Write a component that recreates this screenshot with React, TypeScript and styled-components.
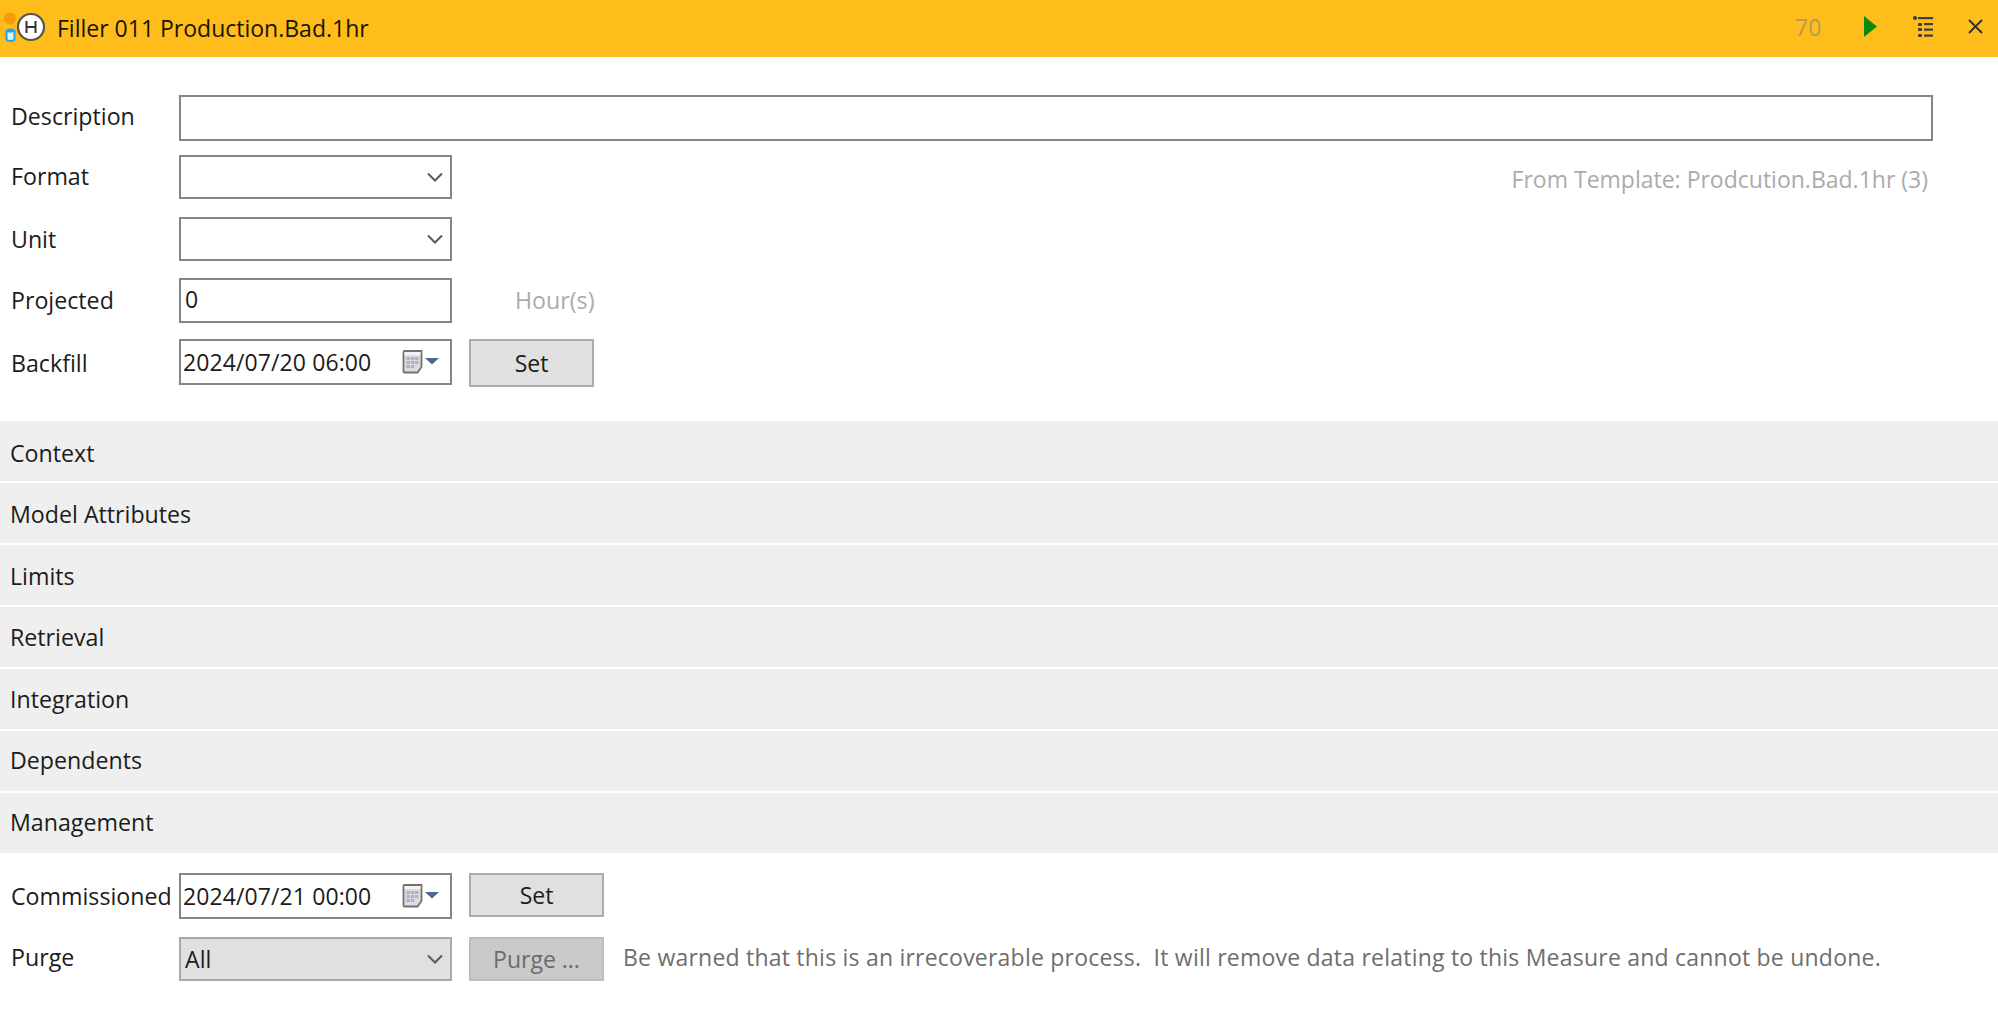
import React from "react";
import styled, { createGlobalStyle } from "styled-components";

const nudge = (dy = 0) => (dy >= 0 ? `padding-top: ${dy * 2}px;` : `padding-bottom: ${-dy * 2}px;`);

const Global = createGlobalStyle`
  html, body { margin: 0; padding: 0; background: #fff; }
  body { font-family: "Open Sans", "Noto Sans", "Liberation Sans", sans-serif; color: #1c1c1c; }
`;
const Page = styled.div`width: 1998px; height: 1016px; overflow: hidden; background: #fff; font-size: 23px;`;
const Header = styled.header`box-sizing: border-box; display: flex; align-items: center; height: 57px; padding-bottom: 4px; background: #febd1b;`;
const Title = styled.div`margin-left: 11px; flex: 1; padding-top: 2px; font-size: 23px; color: #1a1400;`;
const Count = styled.span`font-size: 23px; color: #b39a5a; width: 25px;`;
const HeaderIcon = styled.svg`display: block; flex: none;`;
const Form = styled.section`display: flex; flex-direction: column; padding: 38px 0 36px 0;`;
const Row = styled.div<{ $h: number; $mt?: number }>`
  display: flex; align-items: center; height: ${p => p.$h}px; margin-top: ${p => p.$mt ?? 0}px; padding-left: 11px;
`;
const Label = styled.label<{ $dy?: number }>`flex: none; width: 168px; font-size: 23.2px; color: #1c1c1c; ${p => nudge(p.$dy)}`;
const Box = styled.div<{ $w?: number; $disabled?: boolean; $pad?: number }>`
  box-sizing: border-box; display: flex; align-items: center; height: 100%; width: ${p => p.$w ?? 273}px;
  border: 2px solid ${p => (p.$disabled ? "#a9a9a9" : "#858585")};
  background: ${p => (p.$disabled ? "#e0e0e0" : "#fff")};
  padding-left: ${p => p.$pad ?? 4}px; font-size: 23px; color: #1c1c1c; flex: none;
`;
const Value = styled.span<{ $dy?: number }>`flex: 1; white-space: nowrap; letter-spacing: 0.1px; ${p => nudge(p.$dy)}`;
const Hint = styled.span`margin-left: 63px; padding-bottom: 2px; color: #ababab; font-size: 23.2px;`;
const FromTemplate = styled.span`margin-left: auto; margin-right: 70px; padding-top: 4px; color: #ababab; font-size: 23px;`;
const Btn = styled.button<{ $w: number; $h: number; $dark?: boolean }>`
  box-sizing: border-box; flex: none; align-self: flex-start; height: ${p => p.$h}px; width: ${p => p.$w}px; margin-left: 17px; padding: 0;
  border: 2px solid ${p => (p.$dark ? "#bdbdbd" : "#acacac")};
  background: ${p => (p.$dark ? "#cacaca" : "#e0e0e0")};
  color: ${p => (p.$dark ? "#6b6b6b" : "#1c1c1c")};
  font: inherit; font-size: 23px;
`;
const Accordion = styled.div`display: flex; flex-direction: column; gap: 2px;`;
const Section = styled.div<{ $dy: number }>`
  box-sizing: border-box; display: flex; align-items: center; height: 60px; padding-left: 10px; background: #efefef;
  font-size: 23.2px; color: #1c1c1c; ${p => nudge(p.$dy)}
`;
const Warning = styled.span`margin-left: 19px; padding-bottom: 5px; white-space: pre; color: #6e6e6e; font-size: 23px; letter-spacing: 0.22px;`;
const Management = styled.section`display: flex; flex-direction: column; padding-top: 20px;`;

const Chevron = () => (
  <svg width="20" height="12" viewBox="0 0 20 12" style={{ marginRight: 5, flex: "none" }}>
    <path d="M3 2.5 L10 9.5 L17 2.5" fill="none" stroke="#5a5a5a" strokeWidth="2" />
  </svg>
);
const Calendar = () => (
  <svg width="38" height="24" viewBox="0 0 38 24" style={{ marginRight: 10, flex: "none" }}>
    <path d="M1.5 2 Q1.5 1 2.5 1 H19.5 V17 L15.5 22.5 H2.5 Q1.5 22.5 1.5 21.5 Z" fill="#dcdde4" stroke="#77706a" strokeWidth="1.8" />
    <rect x="2.5" y="2" width="16" height="3" fill="#f2f2f4" />
    <g fill="#aeb2c0">
      <rect x="4.5" y="7" width="3.4" height="3" /><rect x="8.8" y="7" width="3.4" height="3" /><rect x="13" y="7" width="3.4" height="3" />
      <rect x="4.5" y="11" width="3.4" height="3" /><rect x="8.8" y="11" width="3.4" height="3" /><rect x="13" y="11" width="3.4" height="3" />
      <rect x="4.5" y="15" width="3.4" height="3" /><rect x="8.8" y="15" width="3.4" height="3" />
    </g>
    <path d="M23 8 H37 L30 14.5 Z" fill="#51668c" />
  </svg>
);

const sections = [
  { name: "Context", dy: 2 },
  { name: "Model Attributes", dy: 1 },
  { name: "Limits", dy: 1 },
  { name: "Retrieval", dy: 0 },
  { name: "Integration", dy: 0 },
  { name: "Dependents", dy: -1 },
  { name: "Management", dy: -1 },
];

export default function App() {
  return (
    <Page>
      <Global />
      <Header>
        <HeaderIcon width="46" height="53" viewBox="0 0 46 53">
          <circle cx="10" cy="18.5" r="6" fill="#f79a10" />
          <path d="M6.5 31 V39 Q6.5 41 10.5 41 Q14.5 41 14.5 39 V31 Z" fill="#d9f2ff" stroke="#1ea5ea" strokeWidth="2" />
          <ellipse cx="10.5" cy="30.5" rx="4" ry="2" fill="#1ea5ea" />
          <circle cx="31" cy="27" r="13" fill="#fff" stroke="#55554d" strokeWidth="2.2" />
          <path d="M26.5 21 V33 M35.5 21 V33 M26.5 27 H35.5" stroke="#333" strokeWidth="2" fill="none" />
        </HeaderIcon>
        <Title>Filler 011 Production.Bad.1hr</Title>
        <Count>70</Count>
        <HeaderIcon width="13" height="21" viewBox="0 0 13 21" style={{ marginLeft: 44 }}>
          <path d="M0 0 L13 10.5 L0 21 Z" fill="#0a8a0a" />
        </HeaderIcon>
        <HeaderIcon width="20" height="21" viewBox="0 0 20 21" style={{ marginLeft: 36 }}>
          <g fill="#3f3f3f">
            <circle cx="2" cy="2" r="2" /><rect x="5" y="1" width="15" height="2.2" />
            <rect x="5" y="7" width="4" height="3" rx="1" /><rect x="11" y="7" width="9" height="2.2" />
            <rect x="5" y="12" width="4" height="3" rx="1" /><rect x="11" y="12.5" width="9" height="2.2" />
            <rect x="5" y="18" width="4" height="3" rx="1" /><rect x="11" y="18.5" width="9" height="2.2" />
          </g>
        </HeaderIcon>
        <HeaderIcon width="15" height="15" viewBox="0 0 15 15" style={{ marginLeft: 35, marginRight: 15 }}>
          <path d="M1 1 L14 14 M14 1 L1 14" stroke="#33302a" strokeWidth="1.8" fill="none" />
        </HeaderIcon>
      </Header>
      <Form>
        <Row $h={46}>
          <Label $dy={-2.5}>Description</Label>
          <Box $w={1754} />
        </Row>
        <Row $h={44} $mt={14}>
          <Label $dy={-1.5}>Format</Label>
          <Box><Value /><Chevron /></Box>
          <FromTemplate>From Template: Prodcution.Bad.1hr (3)</FromTemplate>
        </Row>
        <Row $h={44} $mt={18}>
          <Label>Unit</Label>
          <Box><Value /><Chevron /></Box>
        </Row>
        <Row $h={45} $mt={17}>
          <Label $dy={-1}>Projected</Label>
          <Box><Value $dy={-2}>0</Value></Box>
          <Hint>Hour(s)</Hint>
        </Row>
        <Row $h={46} $mt={16}>
          <Label $dy={1}>Backfill</Label>
          <Box $pad={2}><Value>2024/07/20 06:00</Value><Calendar /></Box>
          <Btn $w={125} $h={48}>Set</Btn>
        </Row>
      </Form>
      <Accordion>
        {sections.map(s => <Section key={s.name} $dy={s.dy}>{s.name}</Section>)}
      </Accordion>
      <Management>
        <Row $h={46}>
          <Label>Commissioned</Label>
          <Box $pad={2}><Value>2024/07/21 00:00</Value><Calendar /></Box>
          <Btn $w={135} $h={44}>Set</Btn>
        </Row>
        <Row $h={44} $mt={18}>
          <Label $dy={-2.5}>Purge</Label>
          <Box $disabled><Value>All</Value><Chevron /></Box>
          <Btn $w={135} $h={44} $dark>Purge ...</Btn>
          <Warning>Be warned that this is an irrecoverable process.  It will remove data relating to this Measure and cannot be undone.</Warning>
        </Row>
      </Management>
    </Page>
  );
}
